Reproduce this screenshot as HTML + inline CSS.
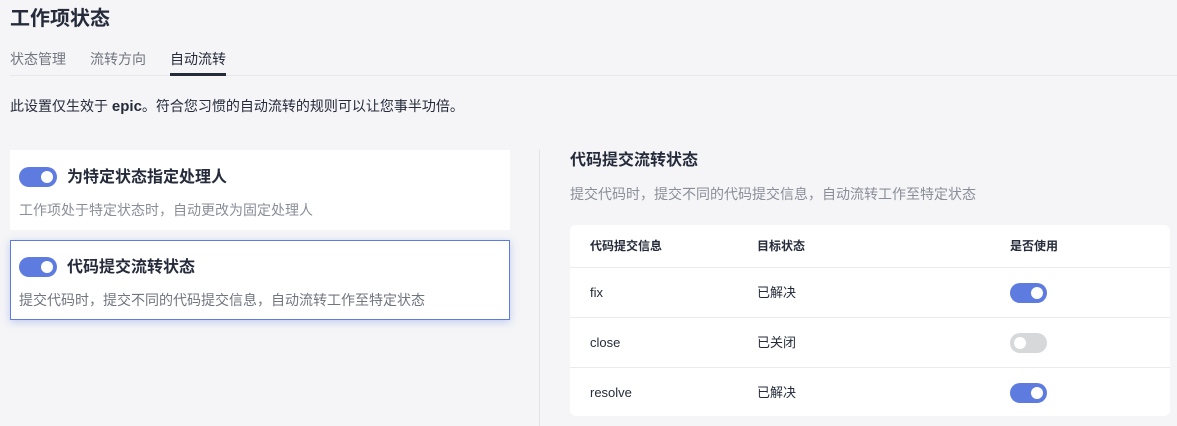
<!DOCTYPE html>
<html><head><meta charset="utf-8"><style>
*{margin:0;padding:0;box-sizing:border-box}
body{width:1177px;height:426px;background:#f5f5f7;font-family:"Liberation Sans","Noto Sans CJK SC",sans-serif;color:#252b3a;position:relative;overflow:hidden}
.a{position:absolute;white-space:nowrap;line-height:1}
.tg{position:absolute;width:38px;height:20px;border-radius:10px;background:#5e7ce0}
.tg::after{content:"";position:absolute;right:4px;top:4px;width:12px;height:12px;border-radius:50%;background:#fff}
.tg.off{background:#d7d8da}
.tg.off::after{left:4px;right:auto}
.card{position:absolute;left:10px;width:500px;height:80px;background:#fff}
.row{position:absolute;left:0;right:0;border-top:1px solid #ebebeb;height:50px}
.c{font-size:13px;top:18px}
</style></head><body>
<div class="a" style="left:10px;top:9px;font-size:20px;font-weight:bold;">工作项状态</div>
<div class="a" style="left:10px;top:52px;font-size:14px;color:#71757f">状态管理</div>
<div class="a" style="left:90px;top:52px;font-size:14px;color:#71757f">流转方向</div>
<div class="a" style="left:170px;top:52px;font-size:14px;color:#252b3a">自动流转</div>
<div class="a" style="left:10px;top:75px;width:1167px;height:1px;background:#e8e8ec"></div>
<div class="a" style="left:170px;top:73px;width:56px;height:3px;background:#252b3a"></div>
<div class="a" style="left:10px;top:99px;font-size:14px">此设置仅生效于 <b style="font-size:15px">epic</b>。符合您习惯的自动流转的规则可以让您事半功倍。</div>

<div class="card" style="top:150px">
<div class="tg" style="left:9px;top:17px"></div>
<div class="a" style="left:57px;top:20px;font-size:16px;font-weight:bold">为特定状态指定处理人</div>
<div class="a" style="left:9px;top:53px;font-size:14px;color:#8a8e99">工作项处于特定状态时，自动更改为固定处理人</div>
</div>
<div class="card" style="top:240px;border:1px solid #5e7ce0;box-shadow:0 2px 8px rgba(94,124,224,.35)">
<div class="tg" style="left:8px;top:16px"></div>
<div class="a" style="left:56px;top:19px;font-size:16px;font-weight:bold">代码提交流转状态</div>
<div class="a" style="left:8px;top:52px;font-size:14px;color:#71757f">提交代码时，提交不同的代码提交信息，自动流转工作至特定状态</div>
</div>

<div class="a" style="left:539px;top:150px;width:1px;height:276px;background:#e3e3e6"></div>
<div class="a" style="left:570px;top:153px;font-size:16px;font-weight:bold">代码提交流转状态</div>
<div class="a" style="left:570px;top:187px;font-size:14px;color:#8a8e99">提交代码时，提交不同的代码提交信息，自动流转工作至特定状态</div>

<div class="a" style="left:570px;top:225px;width:600px;height:191px;background:#fff;border-radius:6px">
<div class="a" style="left:20px;top:15px;font-size:12px;font-weight:bold">代码提交信息</div>
<div class="a" style="left:187px;top:15px;font-size:12px;font-weight:bold">目标状态</div>
<div class="a" style="left:440px;top:15px;font-size:12px;font-weight:bold">是否使用</div>
<div class="row" style="top:42px"><div class="a c" style="left:20px">fix</div><div class="a c" style="left:187px">已解决</div><div class="tg" style="left:440px;top:15px;width:37px"></div></div>
<div class="row" style="top:92px"><div class="a c" style="left:20px">close</div><div class="a c" style="left:187px">已关闭</div><div class="tg off" style="left:440px;top:15px;width:37px"></div></div>
<div class="row" style="top:142px"><div class="a c" style="left:20px">resolve</div><div class="a c" style="left:187px">已解决</div><div class="tg" style="left:440px;top:15px;width:37px"></div></div>
</div>
</body></html>
